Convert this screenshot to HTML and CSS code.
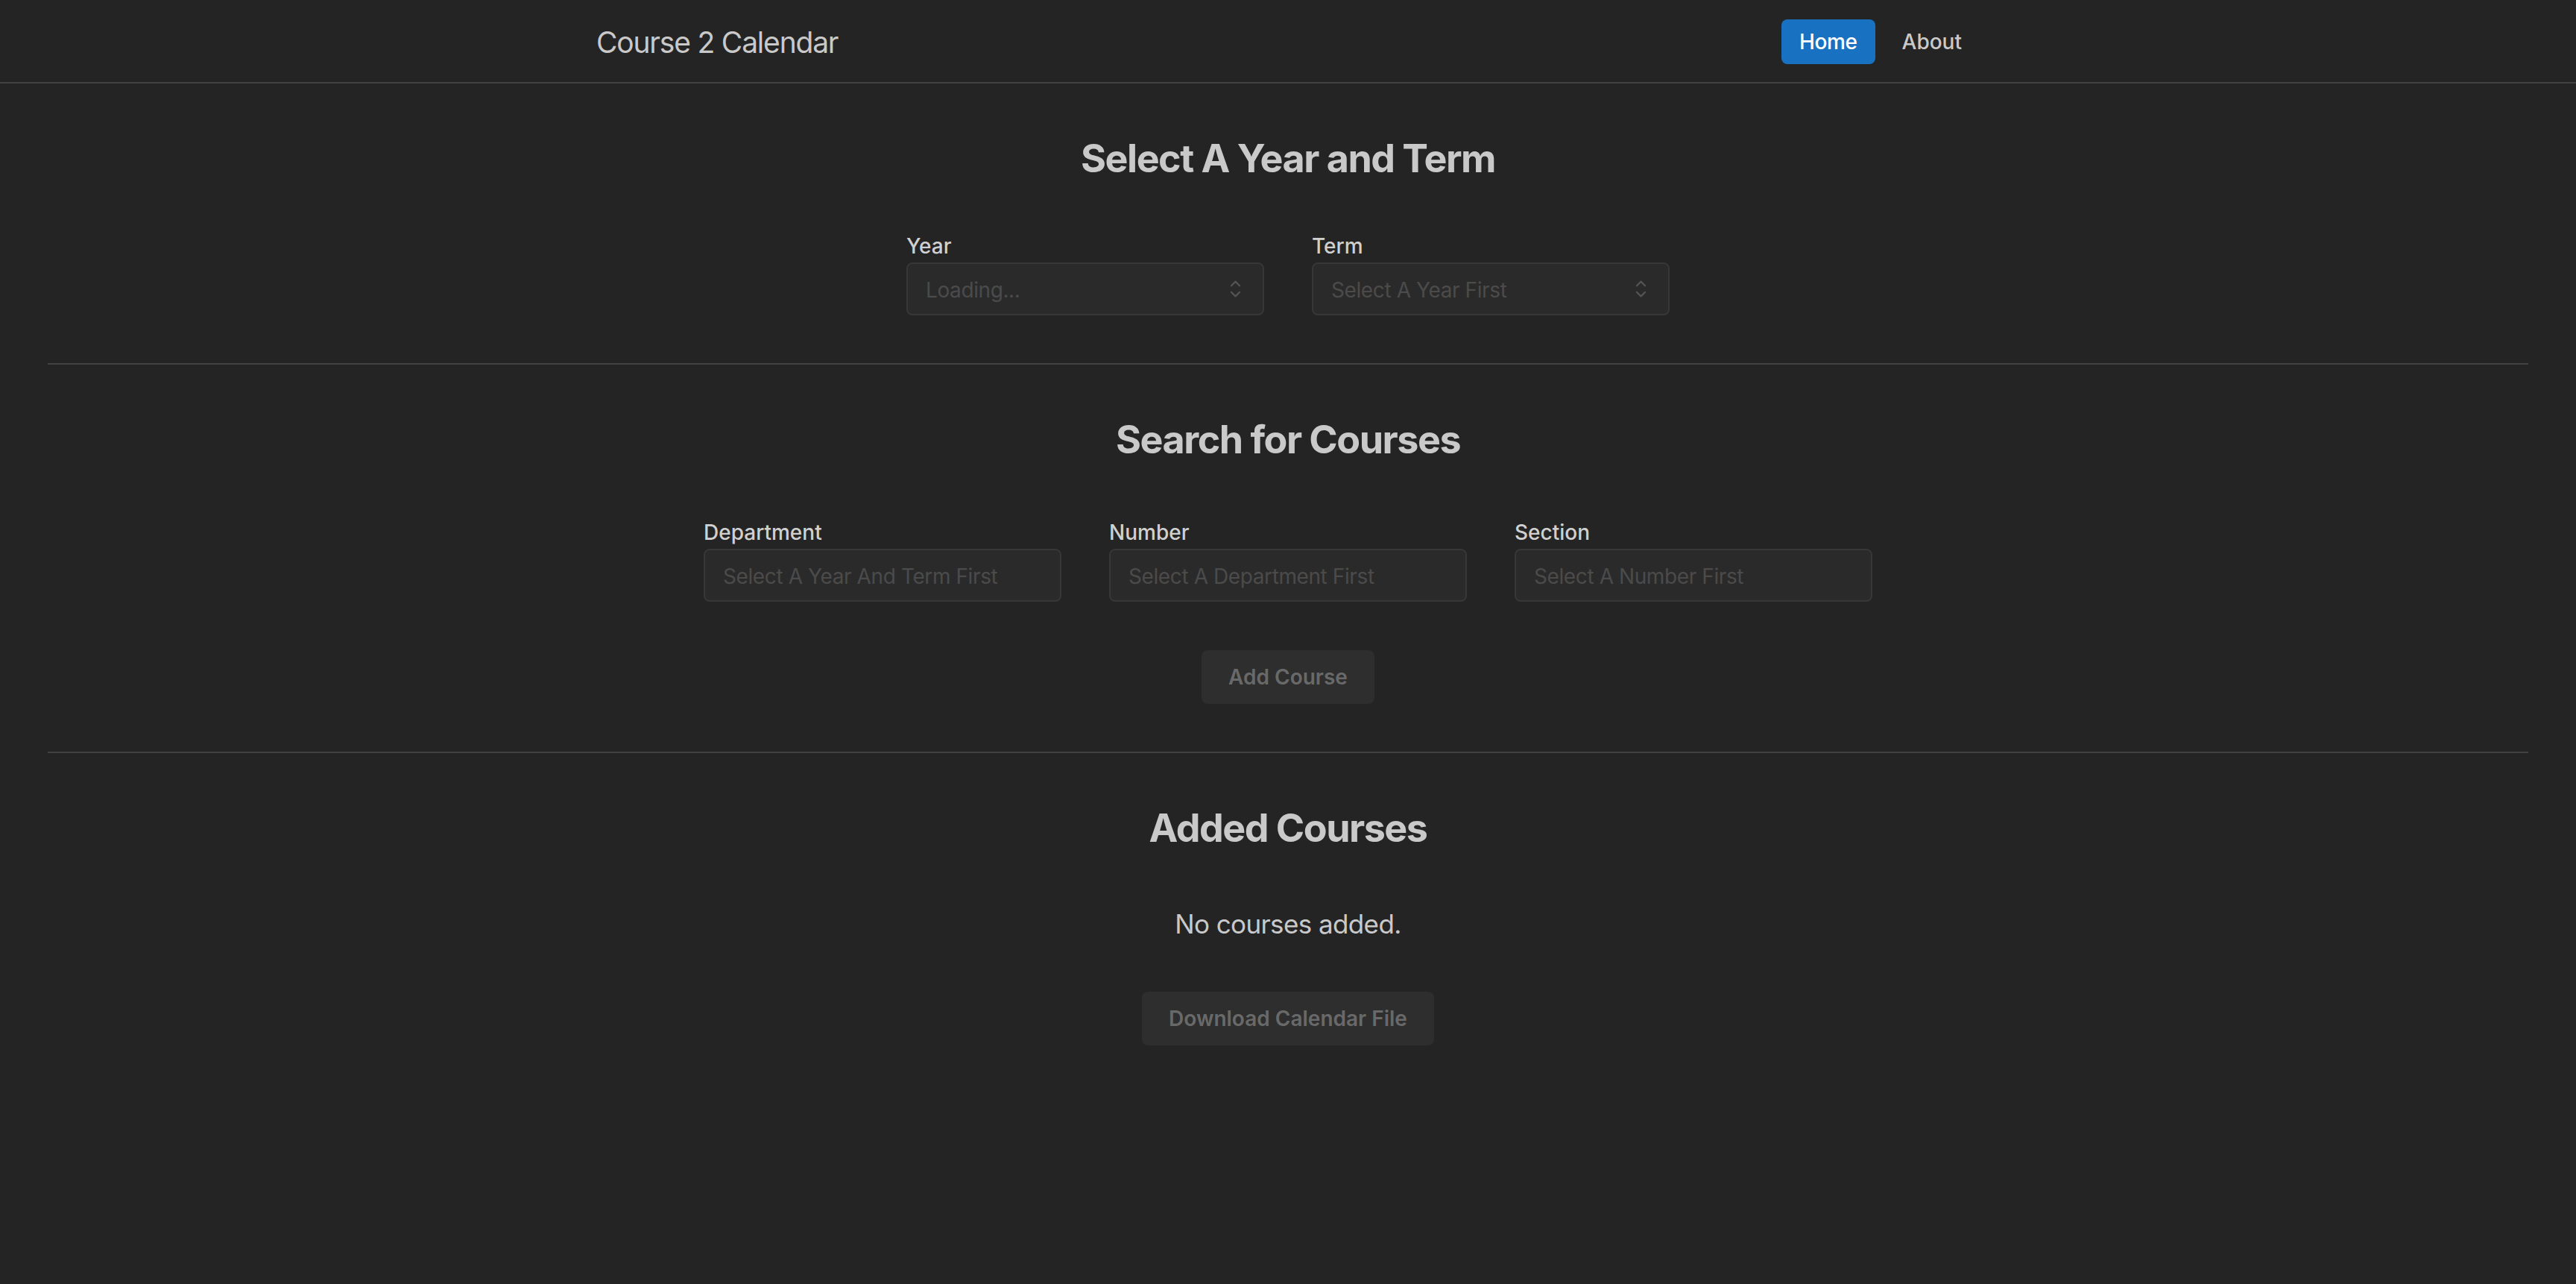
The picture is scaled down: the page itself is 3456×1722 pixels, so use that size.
FILE: index.html
```html
<!DOCTYPE html>
<html lang="en">
<head>
<meta charset="utf-8">
<title>Course 2 Calendar</title>
<link rel="stylesheet" href="styles.css">
</head>
<body>
<header class="header">
  <div class="header-inner">
    <div class="brand">Course 2 Calendar</div>
    <nav class="nav">
      <a class="nav-link active" href="#">Home</a>
      <a class="nav-link" href="#">About</a>
    </nav>
  </div>
</header>
<main class="main">
  <section class="section">
    <h2 class="section-title">Select A Year and Term</h2>
    <div class="fields fields-first">
      <div class="field">
        <div class="label">Year</div>
        <div class="input">
          <span class="placeholder">Loading...</span>
          <svg class="chevron" viewBox="0 0 15 15" fill="none"><path d="M4.93179 5.43179C4.75605 5.60753 4.75605 5.89245 4.93179 6.06819C5.10753 6.24392 5.39245 6.24392 5.56819 6.06819L7.49999 4.13638L9.43179 6.06819C9.60753 6.24392 9.89245 6.24392 10.0682 6.06819C10.2439 5.89245 10.2439 5.60753 10.0682 5.43179L7.81819 3.18179C7.64245 3.00605 7.35753 3.00605 7.18179 3.18179L4.93179 5.43179ZM10.0682 9.56819C10.2439 9.39245 10.2439 9.10753 10.0682 8.93179C9.89245 8.75606 9.60753 8.75606 9.43179 8.93179L7.49999 10.8636L5.56819 8.93179C5.39245 8.75606 5.10753 8.75606 4.93179 8.93179C4.75605 9.10753 4.75605 9.39245 4.93179 9.56819L7.18179 11.8182C7.35753 11.9939 7.64245 11.9939 7.81819 11.8182L10.0682 9.56819Z" fill="currentColor"/></svg>
        </div>
      </div>
      <div class="field">
        <div class="label">Term</div>
        <div class="input">
          <span class="placeholder">Select A Year First</span>
          <svg class="chevron" viewBox="0 0 15 15" fill="none"><path d="M4.93179 5.43179C4.75605 5.60753 4.75605 5.89245 4.93179 6.06819C5.10753 6.24392 5.39245 6.24392 5.56819 6.06819L7.49999 4.13638L9.43179 6.06819C9.60753 6.24392 9.89245 6.24392 10.0682 6.06819C10.2439 5.89245 10.2439 5.60753 10.0682 5.43179L7.81819 3.18179C7.64245 3.00605 7.35753 3.00605 7.18179 3.18179L4.93179 5.43179ZM10.0682 9.56819C10.2439 9.39245 10.2439 9.10753 10.0682 8.93179C9.89245 8.75606 9.60753 8.75606 9.43179 8.93179L7.49999 10.8636L5.56819 8.93179C5.39245 8.75606 5.10753 8.75606 4.93179 8.93179C4.75605 9.10753 4.75605 9.39245 4.93179 9.56819L7.18179 11.8182C7.35753 11.9939 7.64245 11.9939 7.81819 11.8182L10.0682 9.56819Z" fill="currentColor"/></svg>
        </div>
      </div>
    </div>
  </section>

  <hr class="divider">

  <section class="section">
    <h2 class="section-title">Search for Courses</h2>
    <div class="fields fields-second">
      <div class="field">
        <div class="label">Department</div>
        <div class="input"><span class="placeholder">Select A Year And Term First</span></div>
      </div>
      <div class="field">
        <div class="label">Number</div>
        <div class="input"><span class="placeholder">Select A Department First</span></div>
      </div>
      <div class="field">
        <div class="label">Section</div>
        <div class="input"><span class="placeholder">Select A Number First</span></div>
      </div>
    </div>
    <button class="btn btn-add" disabled>Add Course</button>
  </section>

  <hr class="divider">

  <section class="section">
    <h2 class="section-title">Added Courses</h2>
    <p class="empty">No courses added.</p>
    <button class="btn btn-download" disabled>Download Calendar File</button>
  </section>
</main>
</body>
</html>
```

FILE: styles.css
```css
* {
  box-sizing: border-box;
}

html, body {
  margin: 0;
  padding: 0;
  background: #242424;
  color: #c9c9c9;
  font-family: Inter, "Noto Sans", "Liberation Sans", sans-serif;
  -webkit-font-smoothing: antialiased;
}

.header {
  height: 112px;
  border-bottom: 2px solid #424242;
}

.header-inner {
  width: 1920px;
  height: 100%;
  margin: 0 auto;
  padding: 2px 32px 0;
  display: flex;
  align-items: center;
  justify-content: space-between;
}

.brand {
  font-size: 39px;
  font-weight: 400;
  color: #c9c9c9;
  letter-spacing: -1.2px;
}

.nav {
  display: flex;
  align-items: center;
  gap: 12px;
}

.nav-link {
  display: block;
  font-size: 28px;
  line-height: 28px;
  font-weight: 500;
  padding: 16px 24px;
  border-radius: 8px;
  color: #c9c9c9;
  text-decoration: none;
}

.nav-link.active {
  background: #1971c2;
  color: #ffffff;
  letter-spacing: -0.4px;
}

.main {
  padding: 66px 64px 64px;
  display: flex;
  flex-direction: column;
}

.section {
  display: flex;
  flex-direction: column;
  align-items: center;
}

.section-title {
  margin: 0;
  font-size: 52px;
  line-height: 70px;
  font-weight: 700;
  color: #c9c9c9;
  letter-spacing: -1.5px;
}

.fields {
  display: flex;
  gap: 64px;
}

.fields-first {
  margin-top: 61px;
}

.fields-second {
  margin-top: 68px;
}

.field {
  width: 480px;
  display: flex;
  flex-direction: column;
}

.label {
  font-size: 28px;
  line-height: 43px;
  font-weight: 500;
  color: #d0d0d0;
}

.input {
  height: 71px;
  border: 2px solid #373737;
  border-radius: 8px;
  background: #2a2a2a;
  padding: 2px 18px 0 24px;
  display: flex;
  align-items: center;
  justify-content: space-between;
}

.placeholder {
  font-size: 28px;
  color: #4b4b4b;
  letter-spacing: -0.4px;
}

.chevron {
  width: 37px;
  height: 37px;
  color: #555555;
  flex: none;
  margin-top: -2px;
}

.divider {
  margin: 64px 0;
  border: 0;
  height: 2px;
  background: #424242;
}

.section + .divider {
  margin-top: 64px;
}

.divider + .section {
  margin-top: 2px;
}

.btn {
  font-family: inherit;
  font-size: 28px;
  font-weight: 600;
  height: 72px;
  padding: 0 36px;
  border: 0;
  border-radius: 8px;
  background: #2e2e2e;
  color: #696969;
}

.btn-add {
  margin-top: 65px;
}

.empty {
  margin: 66px 0 0;
  font-size: 35px;
  line-height: 54px;
  color: #c9c9c9;
  letter-spacing: -0.6px;
}

.btn-download {
  margin-top: 64px;
}
```
